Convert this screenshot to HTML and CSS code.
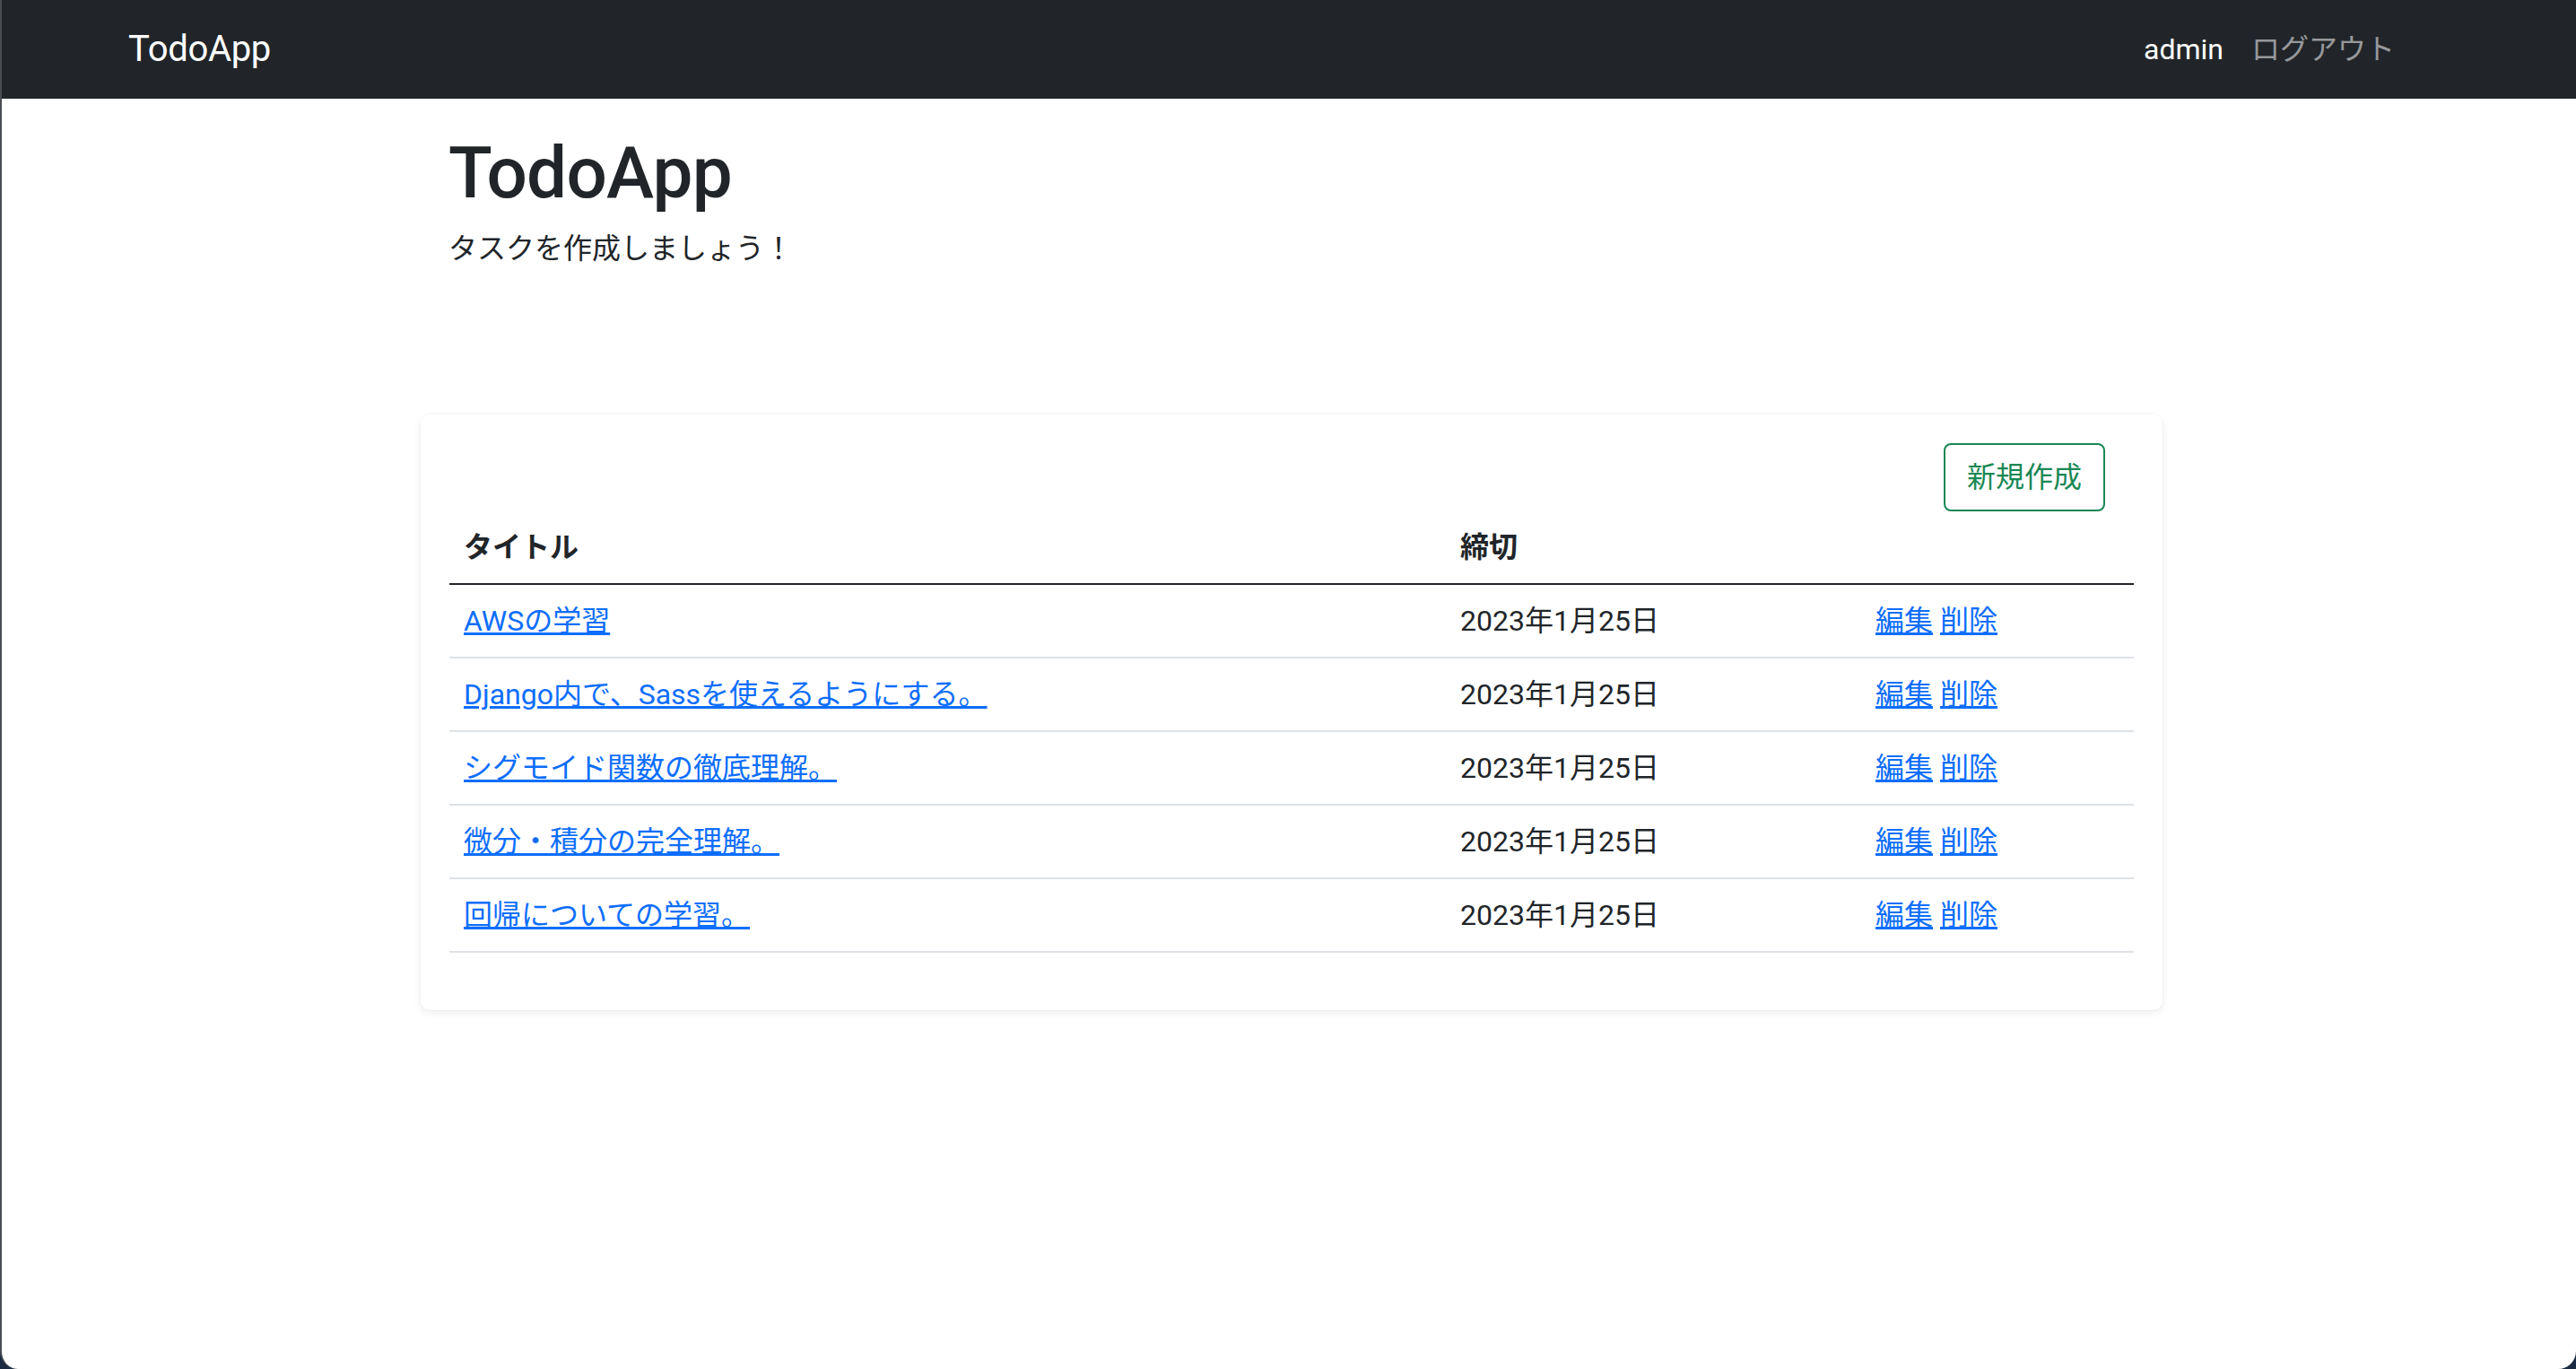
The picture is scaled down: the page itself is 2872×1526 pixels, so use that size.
FILE: index.html
```html
<!DOCTYPE html>
<html lang="ja">
<head>
<meta charset="utf-8">
<title>TodoApp</title>
<link rel="stylesheet" href="styles.css">
</head>
<body>
<nav class="navbar">
  <a class="brand" href="#">TodoApp</a>
  <div class="nav-right">
    <span class="nav-user">admin</span>
    <a class="nav-link" href="#">ログアウト</a>
  </div>
</nav>
<main class="main">
  <header class="hero">
    <h1 class="hero-title">TodoApp</h1>
    <p class="hero-lead">タスクを作成しましょう！</p>
  </header>
  <section class="card">
    <div class="card-actions"><a class="btn-new" href="#">新規作成</a></div>
    <table class="task-table">
      <colgroup>
        <col class="col-title">
        <col class="col-date">
        <col class="col-actions">
      </colgroup>
      <thead>
        <tr><th>タイトル</th><th>締切</th><th></th></tr>
      </thead>
      <tbody>
        <tr><td><a href="#">AWSの学習</a></td><td>2023年1月25日</td><td><a href="#">編集</a> <a href="#">削除</a></td></tr>
        <tr><td><a href="#">Django内で、Sassを使えるようにする。</a></td><td>2023年1月25日</td><td><a href="#">編集</a> <a href="#">削除</a></td></tr>
        <tr><td><a href="#">シグモイド関数の徹底理解。</a></td><td>2023年1月25日</td><td><a href="#">編集</a> <a href="#">削除</a></td></tr>
        <tr><td><a href="#">微分・積分の完全理解。</a></td><td>2023年1月25日</td><td><a href="#">編集</a> <a href="#">削除</a></td></tr>
        <tr><td><a href="#">回帰についての学習。</a></td><td>2023年1月25日</td><td><a href="#">編集</a> <a href="#">削除</a></td></tr>
      </tbody>
    </table>
  </section>
</main>
</body>
</html>
```

FILE: styles.css
```css
html {
  background: #1b2b42;
}
body {
  margin: 0;
  height: 1526px;
  box-sizing: border-box;
  background: #fff;
  border-left: 2px solid #4a4d52;
  border-radius: 0 0 20px 20px;
  overflow: hidden;
  font-family: Roboto, "Noto Sans CJK JP", sans-serif;
  color: #212529;
  font-size: 32px;
  line-height: 48px;
}
.navbar {
  height: 110px;
  background: #212529;
  display: flex;
  align-items: center;
  justify-content: space-between;
  padding: 0 202px 0 141px;
}
.brand {
  font-size: 40px;
  line-height: 60px;
  color: #fff;
  text-decoration: none;
  letter-spacing: -0.3px;
}
.nav-right {
  display: flex;
  align-items: center;
  gap: 31px;
}
.nav-user {
  color: #fff;
}
.nav-link {
  color: rgba(255, 255, 255, 0.55);
  text-decoration: none;
}
.main {
  margin-left: 467px;
  width: 1942px;
}
.hero {
  padding: 35px 31px 0;
}
.hero-title {
  margin: 0 0 12px;
  font-size: 80px;
  line-height: 96px;
  font-weight: 500;
  letter-spacing: -0.8px;
}
.hero-lead {
  margin: 0;
}
.card {
  margin-top: 161px;
  padding: 32px;
  border-radius: 10px;
  box-shadow: 0 3px 10px rgba(0, 0, 0, 0.07), 0 0 0 1px rgba(0, 0, 0, 0.02);
}
.card-actions {
  display: flex;
  justify-content: flex-end;
  padding-right: 32px;
}
.btn-new {
  display: inline-block;
  border: 2px solid #198754;
  color: #198754;
  padding: 12px 24px;
  border-radius: 8px;
  text-decoration: none;
}
.task-table {
  width: 100%;
  border-collapse: collapse;
  margin-bottom: 32px;
}
.col-title {
  width: 1111px;
}
.col-date {
  width: 463px;
}
.task-table th,
.task-table td {
  padding: 16px;
  text-align: left;
  vertical-align: middle;
  border-bottom: 2px solid #dee2e6;
}
.task-table th {
  font-weight: 700;
  border-bottom-color: #212529;
}
.task-table a {
  color: #0d6efd;
  text-decoration: underline;
}
```
